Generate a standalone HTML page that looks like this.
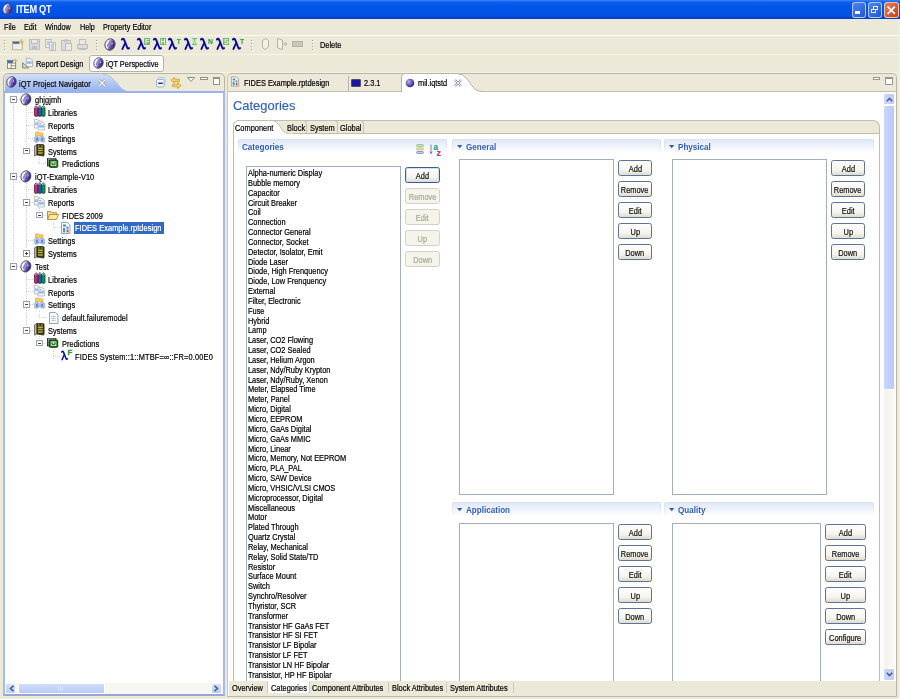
<!DOCTYPE html>
<html><head><meta charset="utf-8"><title>ITEM QT</title><style>
html,body{margin:0;padding:0;}
body{width:900px;height:699px;overflow:hidden;background:#ece9d8;position:relative;font-family:"Liberation Sans",sans-serif;font-size:8px;color:#1a1a1a;}
div{position:absolute;box-sizing:border-box;}
svg{position:absolute;overflow:visible;}
.t{white-space:nowrap;line-height:10px;height:10px;font-size:8.4px;transform:scaleX(0.885);transform-origin:0 50%;-webkit-text-stroke:0.2px currentColor;}
.b{white-space:nowrap;line-height:10px;height:10px;font-weight:bold;}
.btn{border:1px solid #5e7492;border-radius:2.5px;background:linear-gradient(#ffffff,#f5f4ee 65%,#dedbce);text-align:center;line-height:17px;font-size:8.4px;color:#111;-webkit-text-stroke:0.2px currentColor;}
.btn span{display:inline-block;transform:scaleX(0.885);}
.btn.dflt{border-color:#3f5c84;box-shadow:inset 0 0 0 1px #d2def2;}
.btn.dis{border-color:#d4d2c6;color:#aaa89a;background:#f5f4ea;}
.lb{border:1px solid #a2aec2;background:#fff;}
.sec{background:linear-gradient(#d6dff2,rgba(255,255,255,0)) left top/1px 100% no-repeat,linear-gradient(#d6dff2,rgba(255,255,255,0)) right top/1px 100% no-repeat,linear-gradient(#e0e8f8,#eef2fb 45%,#ffffff);border-top:1px solid #dbe3f3;border-radius:2px 2px 0 0;}
.sect{color:#335fb6;font-weight:bold;font-size:8.8px;white-space:nowrap;line-height:10px;transform:scaleX(0.92);transform-origin:0 50%;}
</style></head><body>
<div id="root" style="left:0;top:0;width:900px;height:699px;will-change:transform;">
<svg width="0" height="0" style="left:0;top:0"><defs><linearGradient id="gi" x1="0" y1="0" x2="1" y2="0"><stop offset="0" stop-color="#ffffff"/><stop offset="0.38" stop-color="#efecf9"/><stop offset="0.54" stop-color="#7262b6"/><stop offset="1" stop-color="#281a7c"/></linearGradient></defs></svg>
<div style="left:0px;top:0px;width:900px;height:19.4px;background:linear-gradient(#3f86f3 0%,#0d5eee 11%,#0055ea 35%,#0253e6 65%,#0650e2 82%,#023cc4 100%);"></div>
<svg style="left:1.6px;top:3.2px" width="11.040000000000001" height="11.96" viewBox="0 0 12 13"><g transform="rotate(20 6 6.5)"><ellipse cx="6" cy="6.5" rx="5" ry="5.8" fill="url(#gi)" stroke="#4a4062" stroke-width="0.9"/><path d="M4.2 2.6 L5.6 2 L5.2 10.6 L3.4 8.6 Z" fill="#6a5ab0" opacity="0.75"/><path d="M6.8 3.2 L8.6 5 L7.4 6.6 Z" fill="#d8d4f0" opacity="0.8"/></g></svg>
<div class="b" style="left:15.6px;top:4px;color:#fff;font-size:10.2px;font-weight:bold;letter-spacing:-0.3px;line-height:12px;height:12px;transform:scaleX(0.9);transform-origin:0 50%;">ITEM QT</div>
<div style="left:851.5px;top:1.5px;width:14.5px;height:16px;border:1px solid rgba(255,255,255,0.62);border-radius:3px;background:linear-gradient(135deg,#4f86f0,#1f55d6);"><div style="left:2.2px;top:8.8px;width:5px;height:2.3px;background:#fff"></div></div>
<div style="left:867.8px;top:1.5px;width:14.5px;height:16px;border:1px solid rgba(255,255,255,0.62);border-radius:3px;background:linear-gradient(135deg,#4f86f0,#1f55d6);"><div style="left:4.6px;top:3.2px;width:5px;height:4.4px;border:0.9px solid #e8eefc;border-top-width:1.4px"></div><div style="left:2.4px;top:6px;width:5px;height:4.4px;border:0.9px solid #e8eefc;border-top-width:1.4px;background:#3468de"></div></div>
<div style="left:884px;top:1.5px;width:14.5px;height:16px;border:1px solid rgba(255,255,255,0.62);border-radius:3px;background:linear-gradient(135deg,#e9805a,#c63c16);"><svg style="left:2.2px;top:3px" width="8.5" height="8.5" viewBox="0 0 8 8"><path d="M0.6 0.6 L7.4 7.4 M7.4 0.6 L0.6 7.4" stroke="#fff" stroke-width="1.7"/></svg></div>
<div class="t" style="left:4px;top:22px;color:#000;transform:scaleX(0.865);">File</div>
<div class="t" style="left:24px;top:22px;color:#000;transform:scaleX(0.865);">Edit</div>
<div class="t" style="left:45px;top:22px;color:#000;transform:scaleX(0.865);">Window</div>
<div class="t" style="left:80px;top:22px;color:#000;transform:scaleX(0.865);">Help</div>
<div class="t" style="left:103px;top:22px;color:#000;transform:scaleX(0.865);">Property Editor</div>
<div style="left:0px;top:34.5px;width:900px;height:1px;background:#fbfaf5;"></div>
<div style="left:0px;top:53.5px;width:900px;height:1px;background:#f5f3ea;"></div>
<div style="left:0px;top:72px;width:900px;height:1px;background:#f4f2e8;"></div>
<div style="left:4px;top:40px;width:1px;height:1px;background:#a9a698;"></div>
<div style="left:5px;top:41px;width:1px;height:1px;background:#fff;"></div>
<div style="left:4px;top:43px;width:1px;height:1px;background:#a9a698;"></div>
<div style="left:5px;top:44px;width:1px;height:1px;background:#fff;"></div>
<div style="left:4px;top:46px;width:1px;height:1px;background:#a9a698;"></div>
<div style="left:5px;top:47px;width:1px;height:1px;background:#fff;"></div>
<div style="left:4px;top:49px;width:1px;height:1px;background:#a9a698;"></div>
<div style="left:5px;top:50px;width:1px;height:1px;background:#fff;"></div>
<div style="left:96px;top:40px;width:1px;height:1px;background:#a9a698;"></div>
<div style="left:97px;top:41px;width:1px;height:1px;background:#fff;"></div>
<div style="left:96px;top:43px;width:1px;height:1px;background:#a9a698;"></div>
<div style="left:97px;top:44px;width:1px;height:1px;background:#fff;"></div>
<div style="left:96px;top:46px;width:1px;height:1px;background:#a9a698;"></div>
<div style="left:97px;top:47px;width:1px;height:1px;background:#fff;"></div>
<div style="left:96px;top:49px;width:1px;height:1px;background:#a9a698;"></div>
<div style="left:97px;top:50px;width:1px;height:1px;background:#fff;"></div>
<div style="left:251px;top:40px;width:1px;height:1px;background:#a9a698;"></div>
<div style="left:252px;top:41px;width:1px;height:1px;background:#fff;"></div>
<div style="left:251px;top:43px;width:1px;height:1px;background:#a9a698;"></div>
<div style="left:252px;top:44px;width:1px;height:1px;background:#fff;"></div>
<div style="left:251px;top:46px;width:1px;height:1px;background:#a9a698;"></div>
<div style="left:252px;top:47px;width:1px;height:1px;background:#fff;"></div>
<div style="left:251px;top:49px;width:1px;height:1px;background:#a9a698;"></div>
<div style="left:252px;top:50px;width:1px;height:1px;background:#fff;"></div>
<div style="left:312px;top:40px;width:1px;height:1px;background:#a9a698;"></div>
<div style="left:313px;top:41px;width:1px;height:1px;background:#fff;"></div>
<div style="left:312px;top:43px;width:1px;height:1px;background:#a9a698;"></div>
<div style="left:313px;top:44px;width:1px;height:1px;background:#fff;"></div>
<div style="left:312px;top:46px;width:1px;height:1px;background:#a9a698;"></div>
<div style="left:313px;top:47px;width:1px;height:1px;background:#fff;"></div>
<div style="left:312px;top:49px;width:1px;height:1px;background:#a9a698;"></div>
<div style="left:313px;top:50px;width:1px;height:1px;background:#fff;"></div>
<svg style="left:12px;top:39px" width="12" height="12" viewBox="0 0 12 12"><defs><linearGradient id="gn" x1="0" y1="0" x2="1" y2="0"><stop offset="0" stop-color="#dfeafc"/><stop offset="1" stop-color="#fbf4d4"/></linearGradient></defs><rect x="0.6" y="2.4" width="9.6" height="8.4" fill="url(#gn)" stroke="#a89a78" stroke-width="0.7"/><rect x="1" y="2.8" width="6.4" height="2" fill="#3e62ae"/><path d="M9.3 0 L10.1 1.9 L12 2.6 L10.1 3.4 L9.3 5.4 L8.5 3.4 L6.8 2.6 L8.5 1.9 Z" fill="#ecc440" stroke="#d0a020" stroke-width="0.3"/></svg>
<svg style="left:29px;top:39px" width="12" height="12" viewBox="0 0 12 12"><rect x="0.5" y="0.5" width="10" height="10" fill="#dadade" stroke="#bebec6"/><rect x="2.5" y="0.5" width="6" height="4" fill="#eceadf" stroke="#bebec6"/><rect x="3" y="7" width="5" height="3.5" fill="#bebec6"/></svg>
<svg style="left:45px;top:39px" width="12" height="12" viewBox="0 0 12 12"><rect x="0.5" y="0.5" width="6" height="8" fill="#e8e8ea" stroke="#bebec6"/><path d="M2 3h3M2 5h2" stroke="#9eb2d8"/><rect x="4.5" y="3.5" width="6" height="8" fill="#ecece8" stroke="#bebec6"/><path d="M6 6h3M6 8h3M6 10h3" stroke="#8ea6d4"/><path d="M8.5 3.5v2h2" fill="#e8dca0" stroke="#c8c0a0" stroke-width="0.5"/></svg>
<svg style="left:61px;top:39px" width="12" height="12" viewBox="0 0 12 12"><rect x="0.5" y="1.5" width="9" height="10" fill="#dadade" stroke="#bebec6"/><rect x="3" y="0.5" width="4" height="2" fill="#bebec6"/><rect x="4.5" y="4.5" width="6" height="7" fill="#eceadf" stroke="#bebec6"/></svg>
<svg style="left:77px;top:39px" width="12" height="12" viewBox="0 0 12 12"><rect x="2.5" y="0.5" width="6" height="5" fill="#eceadf" stroke="#bebec6"/><rect x="0.5" y="5.5" width="10" height="4" fill="#dadade" stroke="#bebec6"/><rect x="2" y="9" width="7" height="2" fill="#bebec6"/></svg>
<svg style="left:104px;top:38px" width="12.0" height="13.0" viewBox="0 0 12 13"><g transform="rotate(20 6 6.5)"><ellipse cx="6" cy="6.5" rx="5" ry="5.8" fill="url(#gi)" stroke="#4a4062" stroke-width="0.9"/><path d="M4.2 2.6 L5.6 2 L5.2 10.6 L3.4 8.6 Z" fill="#6a5ab0" opacity="0.75"/><path d="M6.8 3.2 L8.6 5 L7.4 6.6 Z" fill="#d8d4f0" opacity="0.8"/></g></svg>
<svg style="left:121.0px;top:37.3px" width="8.6" height="13.2" viewBox="0 0 10 14" preserveAspectRatio="none"><path d="M1 2.6 Q2.6 0.8 3.8 3.2 L7.4 11.6 Q8 12.8 9.4 11.8" stroke="#0c0c96" stroke-width="2.2" fill="none" stroke-linecap="round"/><path d="M4.9 6.2 L1.6 12.8" stroke="#0e0e9e" stroke-width="2.1" fill="none" stroke-linecap="round"/></svg>
<svg style="left:136.8px;top:37.3px" width="8.6" height="13.2" viewBox="0 0 10 14" preserveAspectRatio="none"><path d="M1 2.6 Q2.6 0.8 3.8 3.2 L7.4 11.6 Q8 12.8 9.4 11.8" stroke="#0c0c96" stroke-width="2.2" fill="none" stroke-linecap="round"/><path d="M4.9 6.2 L1.6 12.8" stroke="#0e0e9e" stroke-width="2.1" fill="none" stroke-linecap="round"/></svg>
<div style="left:144.4px;top:37.8px;width:5.6px;height:7.0px;background:rgba(84,172,84,0.78);color:#e2f6e0;font-weight:bold;font-size:6.8px;line-height:7.0px;text-align:center;">F</div>
<svg style="left:152.6px;top:37.3px" width="8.6" height="13.2" viewBox="0 0 10 14" preserveAspectRatio="none"><path d="M1 2.6 Q2.6 0.8 3.8 3.2 L7.4 11.6 Q8 12.8 9.4 11.8" stroke="#0c0c96" stroke-width="2.2" fill="none" stroke-linecap="round"/><path d="M4.9 6.2 L1.6 12.8" stroke="#0e0e9e" stroke-width="2.1" fill="none" stroke-linecap="round"/></svg>
<div style="left:160.2px;top:37.8px;width:5.6px;height:7.0px;background:rgba(84,172,84,0.78);color:#e2f6e0;font-weight:bold;font-size:6.8px;line-height:7.0px;text-align:center;">H</div>
<svg style="left:168.4px;top:37.3px" width="8.6" height="13.2" viewBox="0 0 10 14" preserveAspectRatio="none"><path d="M1 2.6 Q2.6 0.8 3.8 3.2 L7.4 11.6 Q8 12.8 9.4 11.8" stroke="#0c0c96" stroke-width="2.2" fill="none" stroke-linecap="round"/><path d="M4.9 6.2 L1.6 12.8" stroke="#0e0e9e" stroke-width="2.1" fill="none" stroke-linecap="round"/></svg>
<div style="left:176.0px;top:37.8px;width:5.6px;height:7.0px;background:transparent;color:#23943a;font-weight:bold;font-size:6.8px;line-height:7.0px;text-align:center;">T</div>
<svg style="left:184.2px;top:37.3px" width="8.6" height="13.2" viewBox="0 0 10 14" preserveAspectRatio="none"><path d="M1 2.6 Q2.6 0.8 3.8 3.2 L7.4 11.6 Q8 12.8 9.4 11.8" stroke="#0c0c96" stroke-width="2.2" fill="none" stroke-linecap="round"/><path d="M4.9 6.2 L1.6 12.8" stroke="#0e0e9e" stroke-width="2.1" fill="none" stroke-linecap="round"/></svg>
<div style="left:191.79999999999998px;top:37.8px;width:5.6px;height:7.0px;background:rgba(84,172,84,0.78);color:#e2f6e0;font-weight:bold;font-size:6.8px;line-height:7.0px;text-align:center;">M</div>
<svg style="left:200.0px;top:37.3px" width="8.6" height="13.2" viewBox="0 0 10 14" preserveAspectRatio="none"><path d="M1 2.6 Q2.6 0.8 3.8 3.2 L7.4 11.6 Q8 12.8 9.4 11.8" stroke="#0c0c96" stroke-width="2.2" fill="none" stroke-linecap="round"/><path d="M4.9 6.2 L1.6 12.8" stroke="#0e0e9e" stroke-width="2.1" fill="none" stroke-linecap="round"/></svg>
<div style="left:207.6px;top:37.8px;width:5.6px;height:7.0px;background:transparent;color:#23943a;font-weight:bold;font-size:6.8px;line-height:7.0px;text-align:center;">N</div>
<svg style="left:215.8px;top:37.3px" width="8.6" height="13.2" viewBox="0 0 10 14" preserveAspectRatio="none"><path d="M1 2.6 Q2.6 0.8 3.8 3.2 L7.4 11.6 Q8 12.8 9.4 11.8" stroke="#0c0c96" stroke-width="2.2" fill="none" stroke-linecap="round"/><path d="M4.9 6.2 L1.6 12.8" stroke="#0e0e9e" stroke-width="2.1" fill="none" stroke-linecap="round"/></svg>
<div style="left:223.4px;top:37.8px;width:5.6px;height:7.0px;background:rgba(84,172,84,0.78);color:#e2f6e0;font-weight:bold;font-size:6.8px;line-height:7.0px;text-align:center;">S</div>
<svg style="left:231.60000000000002px;top:37.3px" width="8.6" height="13.2" viewBox="0 0 10 14" preserveAspectRatio="none"><path d="M1 2.6 Q2.6 0.8 3.8 3.2 L7.4 11.6 Q8 12.8 9.4 11.8" stroke="#0c0c96" stroke-width="2.2" fill="none" stroke-linecap="round"/><path d="M4.9 6.2 L1.6 12.8" stroke="#0e0e9e" stroke-width="2.1" fill="none" stroke-linecap="round"/></svg>
<div style="left:239.20000000000002px;top:37.8px;width:5.6px;height:7.0px;background:transparent;color:#23943a;font-weight:bold;font-size:6.8px;line-height:7.0px;text-align:center;">T</div>
<svg style="left:260px;top:38px" width="10" height="12" viewBox="0 0 10 12"><path d="M2.5 2.5 L6 0.5 L8.5 2.5 L8.5 9 L5 11.5 L2.5 9.5 Z" fill="#f2f0e6" stroke="#b5b3a6"/></svg>
<svg style="left:276px;top:38px" width="12" height="12" viewBox="0 0 12 12"><path d="M1.5 0.5 L6.5 2 L6.5 11.5 L1.5 10 Z" fill="#f2f0e6" stroke="#b5b3a6"/><path d="M7 6h4M9 4l2 2l-2 2" stroke="#b5b3a6" fill="none"/></svg>
<div style="left:292px;top:41px;width:11px;height:6px;background:#c9c7bb;border:1px solid #b5b3a6;"></div>
<div class="t" style="left:320px;top:40px;color:#000;">Delete</div>
<svg style="left:6.8px;top:58px" width="11" height="11" viewBox="0 0 12 12"><rect x="0.5" y="2.5" width="9" height="9" fill="#fdfbf0" stroke="#6c6c50" stroke-width="0.8"/><rect x="0.9" y="2.9" width="5.6" height="2.4" fill="#3e62ae"/><path d="M0.5 5.5h9M4.5 5.5v6M4.5 8.5h5" stroke="#6c6c50" stroke-width="0.8"/><path d="M9.5 0 L10.2 1.8 L12 2.5 L10.2 3.2 L9.5 5 L8.8 3.2 L7 2.5 L8.8 1.8 Z" fill="#e8b830"/></svg>
<svg style="left:22px;top:58px" width="11" height="10.5" viewBox="0 0 11 10.5"><path d="M4.4 0.4h4.2l1.9 1.9v6.2h-6.1z" fill="#f4f6fa" stroke="#98a0ac" stroke-width="0.7"/><rect x="5" y="3.2" width="4.8" height="2.6" fill="#9cbcea"/><path d="M8.6 0.4v1.9h1.9z" fill="#e6d690"/><path d="M0.5 10 L0.5 4.6 L6.8 10 Z" fill="#c4c8b4" stroke="#7c8470" stroke-width="0.8"/><path d="M2 8.8 L2 7.2 L3.8 8.8Z" fill="#f0f0e8"/></svg>
<div class="t" style="left:36px;top:59.3px;color:#000;">Report Design</div>
<div style="left:89px;top:55px;width:75px;height:17px;background:#fff;border:1px solid #b5b2a2;border-radius:3px;"></div>
<svg style="left:93px;top:57px" width="11.040000000000001" height="11.96" viewBox="0 0 12 13"><g transform="rotate(20 6 6.5)"><ellipse cx="6" cy="6.5" rx="5" ry="5.8" fill="url(#gi)" stroke="#4a4062" stroke-width="0.9"/><path d="M4.2 2.6 L5.6 2 L5.2 10.6 L3.4 8.6 Z" fill="#6a5ab0" opacity="0.75"/><path d="M6.8 3.2 L8.6 5 L7.4 6.6 Z" fill="#d8d4f0" opacity="0.8"/></g></svg>
<div class="t" style="left:106px;top:59.3px;color:#000;">iQT Perspective</div>
<div style="left:3px;top:73px;width:222px;height:623px;border:1px solid #b9b5a2;border-radius:5px 5px 0 0;background:#ece9d8;"></div>
<svg style="left:4.5px;top:74px" width="130" height="18" viewBox="0 0 130 18"><defs><linearGradient id="g1" x1="0" y1="0" x2="0" y2="1"><stop offset="0" stop-color="#d3dff8"/><stop offset="1" stop-color="#93b1ec"/></linearGradient></defs><path d="M0 18 L0 3 Q0 0 3 0 L97 0 Q104 0 109.5 6.5 L116 14 Q119.5 18 128 18 Z" fill="url(#g1)"/><path d="M97 0 Q104 0 109.5 6.5 L116 14 Q119.5 18 128 18" fill="none" stroke="#a6b8dc" stroke-width="0.8"/></svg>
<svg style="left:6px;top:76px" width="11.040000000000001" height="11.96" viewBox="0 0 12 13"><g transform="rotate(20 6 6.5)"><ellipse cx="6" cy="6.5" rx="5" ry="5.8" fill="url(#gi)" stroke="#4a4062" stroke-width="0.9"/><path d="M4.2 2.6 L5.6 2 L5.2 10.6 L3.4 8.6 Z" fill="#6a5ab0" opacity="0.75"/><path d="M6.8 3.2 L8.6 5 L7.4 6.6 Z" fill="#d8d4f0" opacity="0.8"/></g></svg>
<div class="t" style="left:19px;top:78.7px;color:#000;letter-spacing:0.05px;">iQT Project Navigator</div>
<svg style="left:97.5px;top:78.5px" width="8" height="8" viewBox="0 0 8 8"><path d="M1 1 L7 7 M7 1 L1 7" stroke="#8a94ac" stroke-width="2.5"/><path d="M1 1 L7 7 M7 1 L1 7" stroke="#fff" stroke-width="1.2"/></svg>
<svg style="left:155.5px;top:77px" width="10" height="10.5" viewBox="0 0 10 10.5"><rect x="2" y="0.5" width="7" height="7" rx="1" fill="#e4ecf8" stroke="#b4c6e4"/><rect x="0.5" y="2.5" width="7.6" height="7.4" rx="1" fill="#f4f8fe" stroke="#9cb4dc"/><path d="M2.2 6.3h4.6" stroke="#2a3a6a" stroke-width="1.5"/></svg>
<svg style="left:170px;top:76.5px" width="12" height="12" viewBox="0 0 12 12"><path d="M9.5 2.2h-5v-1.9l-3.6 3l3.6 3v-1.9h5z" fill="#f6d468" stroke="#cc9c2c" stroke-width="0.8"/><path d="M2.5 7.4h5v-1.9l3.6 3l-3.6 3v-1.9h-5z" fill="#f6d468" stroke="#cc9c2c" stroke-width="0.8"/></svg>
<svg style="left:187px;top:77px" width="8" height="5" viewBox="0 0 8 5"><path d="M0.5 0.5h7l-3.5 4z" fill="#fff" stroke="#8a8878"/></svg>
<div style="left:200px;top:77px;width:8px;height:3px;background:#fff;border:1px solid #96947f;"></div>
<div style="left:212.8px;top:77px;width:7.4px;height:8px;background:#fff;border:1px solid #96947f;border-top-width:2px;"></div>
<div style="left:3px;top:91px;width:222px;height:605px;border:2px solid #a4bcec;border-top:2px solid #97b4ec;border-bottom:2px solid #93a8d4;background:#fff;"></div>
<div style="left:5px;top:682.8px;width:218px;height:10.8px;background:#f7f6f0;"></div>
<div style="left:5.4px;top:682.8px;width:11px;height:10.8px;background:linear-gradient(#d6e0fb,#bccdf5);border-radius:2px;border:1px solid #fff;"></div>
<div style="left:210.6px;top:682.8px;width:11px;height:10.8px;background:linear-gradient(#d6e0fb,#bccdf5);border-radius:2px;border:1px solid #fff;"></div>
<svg style="left:8.5px;top:684.5px" width="6" height="7" viewBox="0 0 6 7"><path d="M4.5 0.8 L1.5 3.5 L4.5 6.2" stroke="#4d6185" stroke-width="1.6" fill="none"/></svg>
<svg style="left:213px;top:684.5px" width="6" height="7" viewBox="0 0 6 7"><path d="M1.5 0.8 L4.5 3.5 L1.5 6.2" stroke="#4d6185" stroke-width="1.6" fill="none"/></svg>
<div style="left:17.5px;top:682.8px;width:87px;height:10.8px;background:linear-gradient(#d0dcfc,#b9cbf6);border-radius:2px;border:1px solid #fff;"></div>
<div style="left:57.5px;top:685.5px;width:1px;height:5px;background:#d8e2fc;"></div>
<div style="left:59.5px;top:685.5px;width:1px;height:5px;background:#d8e2fc;"></div>
<div style="left:61.5px;top:685.5px;width:1px;height:5px;background:#d8e2fc;"></div>
<div style="left:13px;top:104px;width:1px;height:158px;background:repeating-linear-gradient(180deg,#d2d2d2 0 1px,transparent 1px 2px);"></div>
<div style="left:13px;top:99px;width:7px;height:1px;background:repeating-linear-gradient(90deg,#d2d2d2 0 1px,transparent 1px 2px);"></div>
<div style="left:13px;top:176px;width:7px;height:1px;background:repeating-linear-gradient(90deg,#d2d2d2 0 1px,transparent 1px 2px);"></div>
<div style="left:13px;top:266px;width:7px;height:1px;background:repeating-linear-gradient(90deg,#d2d2d2 0 1px,transparent 1px 2px);"></div>
<div style="left:26px;top:106px;width:1px;height:45px;background:repeating-linear-gradient(180deg,#d2d2d2 0 1px,transparent 1px 2px);"></div>
<div style="left:26px;top:112px;width:8px;height:1px;background:repeating-linear-gradient(90deg,#d2d2d2 0 1px,transparent 1px 2px);"></div>
<div style="left:26px;top:125px;width:8px;height:1px;background:repeating-linear-gradient(90deg,#d2d2d2 0 1px,transparent 1px 2px);"></div>
<div style="left:26px;top:138px;width:8px;height:1px;background:repeating-linear-gradient(90deg,#d2d2d2 0 1px,transparent 1px 2px);"></div>
<div style="left:30px;top:150px;width:4px;height:1px;background:repeating-linear-gradient(90deg,#d2d2d2 0 1px,transparent 1px 2px);"></div>
<div style="left:39px;top:157px;width:1px;height:7px;background:repeating-linear-gradient(180deg,#d2d2d2 0 1px,transparent 1px 2px);"></div>
<div style="left:39px;top:163px;width:8px;height:1px;background:repeating-linear-gradient(90deg,#d2d2d2 0 1px,transparent 1px 2px);"></div>
<div style="left:26px;top:183px;width:1px;height:66px;background:repeating-linear-gradient(180deg,#d2d2d2 0 1px,transparent 1px 2px);"></div>
<div style="left:26px;top:189px;width:8px;height:1px;background:repeating-linear-gradient(90deg,#d2d2d2 0 1px,transparent 1px 2px);"></div>
<div style="left:30px;top:202px;width:4px;height:1px;background:repeating-linear-gradient(90deg,#d2d2d2 0 1px,transparent 1px 2px);"></div>
<div style="left:26px;top:240px;width:8px;height:1px;background:repeating-linear-gradient(90deg,#d2d2d2 0 1px,transparent 1px 2px);"></div>
<div style="left:30px;top:253px;width:4px;height:1px;background:repeating-linear-gradient(90deg,#d2d2d2 0 1px,transparent 1px 2px);"></div>
<div style="left:39px;top:208px;width:1px;height:3px;background:repeating-linear-gradient(180deg,#d2d2d2 0 1px,transparent 1px 2px);"></div>
<div style="left:43px;top:215px;width:4px;height:1px;background:repeating-linear-gradient(90deg,#d2d2d2 0 1px,transparent 1px 2px);"></div>
<div style="left:53px;top:221px;width:1px;height:7px;background:repeating-linear-gradient(180deg,#d2d2d2 0 1px,transparent 1px 2px);"></div>
<div style="left:53px;top:227px;width:8px;height:1px;background:repeating-linear-gradient(90deg,#d2d2d2 0 1px,transparent 1px 2px);"></div>
<div style="left:26px;top:272px;width:1px;height:54px;background:repeating-linear-gradient(180deg,#d2d2d2 0 1px,transparent 1px 2px);"></div>
<div style="left:26px;top:279px;width:8px;height:1px;background:repeating-linear-gradient(90deg,#d2d2d2 0 1px,transparent 1px 2px);"></div>
<div style="left:26px;top:291px;width:8px;height:1px;background:repeating-linear-gradient(90deg,#d2d2d2 0 1px,transparent 1px 2px);"></div>
<div style="left:30px;top:304px;width:4px;height:1px;background:repeating-linear-gradient(90deg,#d2d2d2 0 1px,transparent 1px 2px);"></div>
<div style="left:30px;top:330px;width:4px;height:1px;background:repeating-linear-gradient(90deg,#d2d2d2 0 1px,transparent 1px 2px);"></div>
<div style="left:39px;top:311px;width:1px;height:7px;background:repeating-linear-gradient(180deg,#d2d2d2 0 1px,transparent 1px 2px);"></div>
<div style="left:39px;top:317px;width:8px;height:1px;background:repeating-linear-gradient(90deg,#d2d2d2 0 1px,transparent 1px 2px);"></div>
<div style="left:39px;top:336px;width:1px;height:3px;background:repeating-linear-gradient(180deg,#d2d2d2 0 1px,transparent 1px 2px);"></div>
<div style="left:43px;top:343px;width:4px;height:1px;background:repeating-linear-gradient(90deg,#d2d2d2 0 1px,transparent 1px 2px);"></div>
<div style="left:53px;top:349px;width:1px;height:7px;background:repeating-linear-gradient(180deg,#d2d2d2 0 1px,transparent 1px 2px);"></div>
<div style="left:53px;top:356px;width:8px;height:1px;background:repeating-linear-gradient(90deg,#d2d2d2 0 1px,transparent 1px 2px);"></div>
<div style="left:10.3px;top:96.4px;width:6.6px;height:6.6px;border:1px solid #98a2b4;background:#fff;"><div style="left:0.8px;top:1.8px;width:3px;height:1px;background:#444"></div></div>
<div style="left:10.3px;top:173.29px;width:6.6px;height:6.6px;border:1px solid #98a2b4;background:#fff;"><div style="left:0.8px;top:1.8px;width:3px;height:1px;background:#444"></div></div>
<div style="left:10.3px;top:263.0px;width:6.6px;height:6.6px;border:1px solid #98a2b4;background:#fff;"><div style="left:0.8px;top:1.8px;width:3px;height:1px;background:#444"></div></div>
<div style="left:23.3px;top:147.66px;width:6.6px;height:6.6px;border:1px solid #98a2b4;background:#fff;"><div style="left:0.8px;top:1.8px;width:3px;height:1px;background:#444"></div></div>
<div style="left:23.3px;top:198.92px;width:6.6px;height:6.6px;border:1px solid #98a2b4;background:#fff;"><div style="left:0.8px;top:1.8px;width:3px;height:1px;background:#444"></div></div>
<div style="left:36.3px;top:211.73px;width:6.6px;height:6.6px;border:1px solid #98a2b4;background:#fff;"><div style="left:0.8px;top:1.8px;width:3px;height:1px;background:#444"></div></div>
<div style="left:23.3px;top:250.17999999999998px;width:6.6px;height:6.6px;border:1px solid #98a2b4;background:#fff;"><div style="left:0.8px;top:1.8px;width:3px;height:1px;background:#444"></div><div style="left:1.8px;top:0.8px;width:1px;height:3px;background:#444"></div></div>
<div style="left:23.3px;top:301.44px;width:6.6px;height:6.6px;border:1px solid #98a2b4;background:#fff;"><div style="left:0.8px;top:1.8px;width:3px;height:1px;background:#444"></div></div>
<div style="left:23.3px;top:327.07px;width:6.6px;height:6.6px;border:1px solid #98a2b4;background:#fff;"><div style="left:0.8px;top:1.8px;width:3px;height:1px;background:#444"></div></div>
<div style="left:36.3px;top:339.89px;width:6.6px;height:6.6px;border:1px solid #98a2b4;background:#fff;"><div style="left:0.8px;top:1.8px;width:3px;height:1px;background:#444"></div></div>
<div style="left:74px;top:221.7px;width:90px;height:12.5px;background:#316ac5;"></div>
<svg style="left:19.6px;top:93.4px" width="11.76" height="12.74" viewBox="0 0 12 13"><g transform="rotate(20 6 6.5)"><ellipse cx="6" cy="6.5" rx="5" ry="5.8" fill="url(#gi)" stroke="#4a4062" stroke-width="0.9"/><path d="M4.2 2.6 L5.6 2 L5.2 10.6 L3.4 8.6 Z" fill="#6a5ab0" opacity="0.75"/><path d="M6.8 3.2 L8.6 5 L7.4 6.6 Z" fill="#d8d4f0" opacity="0.8"/></g></svg>
<div class="t" style="left:35px;top:95.3px;color:#000;letter-spacing:0.06px;">ghjgjmh</div>
<svg style="left:33.8px;top:105.12px" width="11.6" height="12.4" viewBox="0 0 12 12.5"><path d="M0.5 2.8 L2.1 0.6 L4.1 2.3 L4.1 11 Q2.3 12.5 0.5 11 Z" fill="#cc2680" stroke="#5a1226" stroke-width="0.8"/><path d="M1 3 L2.2 1.4 L3.6 2.6" fill="none" stroke="#f2c4dc" stroke-width="0.8"/><path d="M4.3 2.6 L5.9 0.4 L7.8 2.1 L7.8 11 Q6 12.5 4.3 11 Z" fill="#2a5ca4" stroke="#10224c" stroke-width="0.8"/><path d="M4.8 2.8 L6 1.2 L7.3 2.4" fill="none" stroke="#c4d8f2" stroke-width="0.8"/><path d="M8 2.7 L9.6 0.6 L11.4 2.3 L11.4 11 Q9.7 12.4 8 11 Z" fill="#1c9258" stroke="#0a3a22" stroke-width="0.8"/><path d="M8.5 2.9 L9.7 1.4 L10.9 2.6" fill="none" stroke="#c4f0d8" stroke-width="0.8"/></svg>
<div class="t" style="left:48px;top:108.1px;color:#000;letter-spacing:0.06px;">Libraries</div>
<svg style="left:34.2px;top:118.73px" width="11" height="11.5" viewBox="0 0 11 11.5"><path d="M0.4 0.4h3.4l1.4 1.4v7.2h-4.8z" fill="#f2f5fa" stroke="#a2aab8" stroke-width="0.7"/><rect x="0.8" y="3.4" width="4" height="2.6" fill="#a6c2ec"/><path d="M3.8 0.4v1.4h1.4z" fill="#ead68c"/><path d="M4 2.2h4.2l2.2 2.2v6.6h-6.4z" fill="#f6f8fc" stroke="#a2aab8" stroke-width="0.7"/><rect x="4.5" y="5.8" width="5.4" height="2.8" fill="#9abaec"/><path d="M8.2 2.2v2.2h2.2z" fill="#ead68c"/><path d="M5.2 4.4h2" stroke="#56627a" stroke-width="0.6"/></svg>
<div class="t" style="left:48px;top:120.9px;color:#000;letter-spacing:0.06px;">Reports</div>
<svg style="left:34.3px;top:130.55px" width="11" height="12" viewBox="0 0 11 12"><path d="M1.4 2.2 Q1.4 0.6 3 0.8 L4.6 1 L5.4 1.8 L8.2 1.8 Q9.2 2 9 3.4 L9 5 L1.4 5 Z" fill="#f2cc68" stroke="#d0a040" stroke-width="0.6"/><path d="M0.4 6.4 Q2 4.6 4 5.8 L5.4 6.8 L7 5.6 Q9.4 4.8 10.6 6.6 L10.6 10.8 Q8.6 12 7 10.6 L5.4 9.6 L4 10.8 Q2 12 0.4 10.6 Z" fill="#b4c6ee" stroke="#8aa2da" stroke-width="0.6"/><path d="M2 7 L4.6 10 M3.6 6.6 L2.4 10.2 M7 7.2 L9.4 9.8 M9 6.8 L7.4 10" stroke="#5672bc" stroke-width="0.9" fill="none"/></svg>
<div class="t" style="left:48px;top:133.8px;color:#000;letter-spacing:0.06px;">Settings</div>
<svg style="left:34.3px;top:143.76px" width="10.6" height="12.6" viewBox="0 0 10.6 12.6"><path d="M0.5 1.8 L3 0.5 L3 11 L0.5 12.1 Z" fill="#b8b8ae" stroke="#4a4a40" stroke-width="0.7"/><path d="M3 0.5 L9.4 0.5 L10.1 1.6 L10.1 11.4 L9.4 12.1 L3 11 Z" fill="#34340f" stroke="#2a2a0c" stroke-width="0.7"/><path d="M4 2h1.4M7.2 2h1.4" stroke="#e0d860" stroke-width="1.1"/><path d="M4 4.2h4.8M4 6.6h4.8M4 9h4.8" stroke="#b8b040" stroke-width="1.5"/></svg>
<div class="t" style="left:48px;top:146.6px;color:#000;letter-spacing:0.06px;">Systems</div>
<svg style="left:47.2px;top:158.38px" width="11.2" height="9.8" viewBox="0 0 11.2 9.8"><rect x="0.5" y="0.5" width="8.4" height="7.4" fill="#7c8c84" stroke="#2c3a30" stroke-width="1"/><path d="M1 1h7.4" stroke="#a8b4c4" stroke-width="0.8"/><rect x="2.4" y="2" width="8.3" height="7.3" rx="0.8" fill="#2a6a2a" stroke="#143414" stroke-width="1"/><rect x="3.7" y="3.3" width="5.7" height="4.7" fill="#b6e69c"/><path d="M5 4.4 L5 6.2 Q6.5 7.2 8 6.2 L8 4.4" fill="none" stroke="#1e4e1e" stroke-width="1"/></svg>
<div class="t" style="left:62px;top:159.4px;color:#000;letter-spacing:0.06px;">Predictions</div>
<svg style="left:19.6px;top:170.29px" width="11.76" height="12.74" viewBox="0 0 12 13"><g transform="rotate(20 6 6.5)"><ellipse cx="6" cy="6.5" rx="5" ry="5.8" fill="url(#gi)" stroke="#4a4062" stroke-width="0.9"/><path d="M4.2 2.6 L5.6 2 L5.2 10.6 L3.4 8.6 Z" fill="#6a5ab0" opacity="0.75"/><path d="M6.8 3.2 L8.6 5 L7.4 6.6 Z" fill="#d8d4f0" opacity="0.8"/></g></svg>
<div class="t" style="left:35px;top:172.2px;color:#000;letter-spacing:0.06px;">iQT-Example-V10</div>
<svg style="left:33.8px;top:182.01px" width="11.6" height="12.4" viewBox="0 0 12 12.5"><path d="M0.5 2.8 L2.1 0.6 L4.1 2.3 L4.1 11 Q2.3 12.5 0.5 11 Z" fill="#cc2680" stroke="#5a1226" stroke-width="0.8"/><path d="M1 3 L2.2 1.4 L3.6 2.6" fill="none" stroke="#f2c4dc" stroke-width="0.8"/><path d="M4.3 2.6 L5.9 0.4 L7.8 2.1 L7.8 11 Q6 12.5 4.3 11 Z" fill="#2a5ca4" stroke="#10224c" stroke-width="0.8"/><path d="M4.8 2.8 L6 1.2 L7.3 2.4" fill="none" stroke="#c4d8f2" stroke-width="0.8"/><path d="M8 2.7 L9.6 0.6 L11.4 2.3 L11.4 11 Q9.7 12.4 8 11 Z" fill="#1c9258" stroke="#0a3a22" stroke-width="0.8"/><path d="M8.5 2.9 L9.7 1.4 L10.9 2.6" fill="none" stroke="#c4f0d8" stroke-width="0.8"/></svg>
<div class="t" style="left:48px;top:185.0px;color:#000;letter-spacing:0.06px;">Libraries</div>
<svg style="left:34.2px;top:195.62px" width="11" height="11.5" viewBox="0 0 11 11.5"><path d="M0.4 0.4h3.4l1.4 1.4v7.2h-4.8z" fill="#f2f5fa" stroke="#a2aab8" stroke-width="0.7"/><rect x="0.8" y="3.4" width="4" height="2.6" fill="#a6c2ec"/><path d="M3.8 0.4v1.4h1.4z" fill="#ead68c"/><path d="M4 2.2h4.2l2.2 2.2v6.6h-6.4z" fill="#f6f8fc" stroke="#a2aab8" stroke-width="0.7"/><rect x="4.5" y="5.8" width="5.4" height="2.8" fill="#9abaec"/><path d="M8.2 2.2v2.2h2.2z" fill="#ead68c"/><path d="M5.2 4.4h2" stroke="#56627a" stroke-width="0.6"/></svg>
<div class="t" style="left:48px;top:197.8px;color:#000;letter-spacing:0.06px;">Reports</div>
<svg style="left:47px;top:210.03px" width="12" height="10" viewBox="0 0 12 10"><path d="M0.5 9.5v-8h3.5l1 1.2h4.5v2" fill="#f6d88a" stroke="#b88a28" stroke-width="0.9"/><path d="M0.5 9.5l2-5h9l-2 5z" fill="#fbe8a8" stroke="#b88a28" stroke-width="0.9"/></svg>
<div class="t" style="left:62px;top:210.6px;color:#000;letter-spacing:0.06px;">FIDES 2009</div>
<svg style="left:61px;top:221.85px" width="10" height="12" viewBox="0 0 10 12"><path d="M0.5 0.5h6l2.5 2.5v8.5h-8.5z" fill="#f6f8fc" stroke="#8a9ab8" stroke-width="0.9"/><rect x="2" y="2.6" width="3" height="2" fill="#3a88d8"/><rect x="5.4" y="4.6" width="2.2" height="2.2" fill="#4a9ad0"/><rect x="2" y="6" width="2.2" height="4.4" fill="#38a0b0"/><rect x="5.6" y="7.6" width="2" height="2.8" fill="#d04848"/></svg>
<div class="t" style="left:75px;top:223.4px;color:#000;letter-spacing:0.06px;color:#fff;">FIDES Example.rptdesign</div>
<svg style="left:34.3px;top:233.07px" width="11" height="12" viewBox="0 0 11 12"><path d="M1.4 2.2 Q1.4 0.6 3 0.8 L4.6 1 L5.4 1.8 L8.2 1.8 Q9.2 2 9 3.4 L9 5 L1.4 5 Z" fill="#f2cc68" stroke="#d0a040" stroke-width="0.6"/><path d="M0.4 6.4 Q2 4.6 4 5.8 L5.4 6.8 L7 5.6 Q9.4 4.8 10.6 6.6 L10.6 10.8 Q8.6 12 7 10.6 L5.4 9.6 L4 10.8 Q2 12 0.4 10.6 Z" fill="#b4c6ee" stroke="#8aa2da" stroke-width="0.6"/><path d="M2 7 L4.6 10 M3.6 6.6 L2.4 10.2 M7 7.2 L9.4 9.8 M9 6.8 L7.4 10" stroke="#5672bc" stroke-width="0.9" fill="none"/></svg>
<div class="t" style="left:48px;top:236.3px;color:#000;letter-spacing:0.06px;">Settings</div>
<svg style="left:34.3px;top:246.28px" width="10.6" height="12.6" viewBox="0 0 10.6 12.6"><path d="M0.5 1.8 L3 0.5 L3 11 L0.5 12.1 Z" fill="#b8b8ae" stroke="#4a4a40" stroke-width="0.7"/><path d="M3 0.5 L9.4 0.5 L10.1 1.6 L10.1 11.4 L9.4 12.1 L3 11 Z" fill="#34340f" stroke="#2a2a0c" stroke-width="0.7"/><path d="M4 2h1.4M7.2 2h1.4" stroke="#e0d860" stroke-width="1.1"/><path d="M4 4.2h4.8M4 6.6h4.8M4 9h4.8" stroke="#b8b040" stroke-width="1.5"/></svg>
<div class="t" style="left:48px;top:249.1px;color:#000;letter-spacing:0.06px;">Systems</div>
<svg style="left:19.6px;top:260.0px" width="11.76" height="12.74" viewBox="0 0 12 13"><g transform="rotate(20 6 6.5)"><ellipse cx="6" cy="6.5" rx="5" ry="5.8" fill="url(#gi)" stroke="#4a4062" stroke-width="0.9"/><path d="M4.2 2.6 L5.6 2 L5.2 10.6 L3.4 8.6 Z" fill="#6a5ab0" opacity="0.75"/><path d="M6.8 3.2 L8.6 5 L7.4 6.6 Z" fill="#d8d4f0" opacity="0.8"/></g></svg>
<div class="t" style="left:35px;top:261.9px;color:#000;letter-spacing:0.06px;">Test</div>
<svg style="left:33.8px;top:271.71px" width="11.6" height="12.4" viewBox="0 0 12 12.5"><path d="M0.5 2.8 L2.1 0.6 L4.1 2.3 L4.1 11 Q2.3 12.5 0.5 11 Z" fill="#cc2680" stroke="#5a1226" stroke-width="0.8"/><path d="M1 3 L2.2 1.4 L3.6 2.6" fill="none" stroke="#f2c4dc" stroke-width="0.8"/><path d="M4.3 2.6 L5.9 0.4 L7.8 2.1 L7.8 11 Q6 12.5 4.3 11 Z" fill="#2a5ca4" stroke="#10224c" stroke-width="0.8"/><path d="M4.8 2.8 L6 1.2 L7.3 2.4" fill="none" stroke="#c4d8f2" stroke-width="0.8"/><path d="M8 2.7 L9.6 0.6 L11.4 2.3 L11.4 11 Q9.7 12.4 8 11 Z" fill="#1c9258" stroke="#0a3a22" stroke-width="0.8"/><path d="M8.5 2.9 L9.7 1.4 L10.9 2.6" fill="none" stroke="#c4f0d8" stroke-width="0.8"/></svg>
<div class="t" style="left:48px;top:274.7px;color:#000;letter-spacing:0.06px;">Libraries</div>
<svg style="left:34.2px;top:285.33px" width="11" height="11.5" viewBox="0 0 11 11.5"><path d="M0.4 0.4h3.4l1.4 1.4v7.2h-4.8z" fill="#f2f5fa" stroke="#a2aab8" stroke-width="0.7"/><rect x="0.8" y="3.4" width="4" height="2.6" fill="#a6c2ec"/><path d="M3.8 0.4v1.4h1.4z" fill="#ead68c"/><path d="M4 2.2h4.2l2.2 2.2v6.6h-6.4z" fill="#f6f8fc" stroke="#a2aab8" stroke-width="0.7"/><rect x="4.5" y="5.8" width="5.4" height="2.8" fill="#9abaec"/><path d="M8.2 2.2v2.2h2.2z" fill="#ead68c"/><path d="M5.2 4.4h2" stroke="#56627a" stroke-width="0.6"/></svg>
<div class="t" style="left:48px;top:287.5px;color:#000;letter-spacing:0.06px;">Reports</div>
<svg style="left:34.3px;top:297.14px" width="11" height="12" viewBox="0 0 11 12"><path d="M1.4 2.2 Q1.4 0.6 3 0.8 L4.6 1 L5.4 1.8 L8.2 1.8 Q9.2 2 9 3.4 L9 5 L1.4 5 Z" fill="#f2cc68" stroke="#d0a040" stroke-width="0.6"/><path d="M0.4 6.4 Q2 4.6 4 5.8 L5.4 6.8 L7 5.6 Q9.4 4.8 10.6 6.6 L10.6 10.8 Q8.6 12 7 10.6 L5.4 9.6 L4 10.8 Q2 12 0.4 10.6 Z" fill="#b4c6ee" stroke="#8aa2da" stroke-width="0.6"/><path d="M2 7 L4.6 10 M3.6 6.6 L2.4 10.2 M7 7.2 L9.4 9.8 M9 6.8 L7.4 10" stroke="#5672bc" stroke-width="0.9" fill="none"/></svg>
<div class="t" style="left:48px;top:300.3px;color:#000;letter-spacing:0.06px;">Settings</div>
<svg style="left:48.6px;top:311.56px" width="10" height="12" viewBox="0 0 10 12"><path d="M0.5 0.5h6l2.5 2.5v8.5h-8.5z" fill="#f6f8fc" stroke="#8a9ab8" stroke-width="0.9"/><path d="M2.5 4.5h4M2.5 6.5h4M2.5 8.5h4" stroke="#a8b8d0" stroke-width="0.8"/></svg>
<div class="t" style="left:62px;top:313.2px;color:#000;letter-spacing:0.06px;">default.failuremodel</div>
<svg style="left:34.3px;top:323.17px" width="10.6" height="12.6" viewBox="0 0 10.6 12.6"><path d="M0.5 1.8 L3 0.5 L3 11 L0.5 12.1 Z" fill="#b8b8ae" stroke="#4a4a40" stroke-width="0.7"/><path d="M3 0.5 L9.4 0.5 L10.1 1.6 L10.1 11.4 L9.4 12.1 L3 11 Z" fill="#34340f" stroke="#2a2a0c" stroke-width="0.7"/><path d="M4 2h1.4M7.2 2h1.4" stroke="#e0d860" stroke-width="1.1"/><path d="M4 4.2h4.8M4 6.6h4.8M4 9h4.8" stroke="#b8b040" stroke-width="1.5"/></svg>
<div class="t" style="left:48px;top:326.0px;color:#000;letter-spacing:0.06px;">Systems</div>
<svg style="left:47.2px;top:337.79px" width="11.2" height="9.8" viewBox="0 0 11.2 9.8"><rect x="0.5" y="0.5" width="8.4" height="7.4" fill="#7c8c84" stroke="#2c3a30" stroke-width="1"/><path d="M1 1h7.4" stroke="#a8b4c4" stroke-width="0.8"/><rect x="2.4" y="2" width="8.3" height="7.3" rx="0.8" fill="#2a6a2a" stroke="#143414" stroke-width="1"/><rect x="3.7" y="3.3" width="5.7" height="4.7" fill="#b6e69c"/><path d="M5 4.4 L5 6.2 Q6.5 7.2 8 6.2 L8 4.4" fill="none" stroke="#1e4e1e" stroke-width="1"/></svg>
<div class="t" style="left:62px;top:338.8px;color:#000;letter-spacing:0.06px;">Predictions</div>
<svg style="left:61px;top:349.5px" width="6.88" height="10.56" viewBox="0 0 10 14" preserveAspectRatio="none"><path d="M1 2.6 Q2.6 0.8 3.8 3.2 L7.4 11.6 Q8 12.8 9.4 11.8" stroke="#0c0c96" stroke-width="2.2" fill="none" stroke-linecap="round"/><path d="M4.9 6.2 L1.6 12.8" stroke="#0e0e9e" stroke-width="2.1" fill="none" stroke-linecap="round"/></svg>
<div style="left:67.6px;top:348.9px;width:5px;height:7px;color:#2e9e3c;font-weight:bold;font-size:8px;line-height:7px;-webkit-text-stroke:0.3px #2e9e3c;">F</div>
<div class="t" style="left:75px;top:351.6px;color:#000;letter-spacing:0.06px;letter-spacing:0.18px;">FIDES System::1::MTBF=∞::FR=0.00E0</div>
<div style="left:226.9px;top:73px;width:670.1px;height:624px;border:1px solid #bbb7a4;border-left-color:#cdc9b7;border-radius:5px 5px 0 0;background:#ece9d8;"></div>
<div style="left:228px;top:74px;width:668px;height:18px;background:#ede9da;border-radius:5px 5px 0 0;"></div>
<div style="left:227.9px;top:90.6px;width:668.1px;height:605.4px;background:#fff;border-top:1px solid #c6c2b0;"></div>
<svg style="left:401px;top:73px" width="90" height="19" viewBox="0 0 90 19"><path d="M0.5 19 L0.5 4 Q0.5 0.5 4 0.5 L56 0.5 Q62 0.5 66 6 L72 14 Q75 18.5 82 18.5 L82 19 Z" fill="#fff"/><path d="M0.5 19 L0.5 4 Q0.5 0.5 4 0.5 L56 0.5 Q62 0.5 66 6 L72 14 Q75 18.5 82 18.5" fill="none" stroke="#b8b4a1" stroke-width="1"/></svg>
<div style="left:347.5px;top:74px;width:8px;height:17px;border-left:1px solid #b8b4a1;border-top:1px solid #b8b4a1;border-radius:4px 0 0 0;"></div>
<div style="left:349px;top:74px;width:8px;height:2px;background:#ece9d8;"></div>
<svg style="left:231.3px;top:76.3px" width="8.5" height="11.2" viewBox="0 0 10 12"><path d="M0.5 0.5h6l2.5 2.5v8.5h-8.5z" fill="#f4f4ec" stroke="#9a9a88" stroke-width="0.9"/><rect x="2" y="2.6" width="3" height="2" fill="#3a88d8"/><rect x="5.4" y="4.6" width="2.2" height="2.2" fill="#4a9ad0"/><rect x="2" y="6" width="2.2" height="4.4" fill="#38a0b0"/><rect x="5.6" y="7.6" width="2" height="2.8" fill="#d04848"/></svg>
<div class="t" style="left:243.8px;top:78.4px;color:#000;">FIDES Example.rptdesign</div>
<div style="left:351px;top:79px;width:10px;height:8px;background:#1818a0;border:1px solid #50506a;border-radius:1px;"></div>
<div class="t" style="left:364px;top:78.4px;color:#000;">2.3.1</div>
<svg style="left:405px;top:78px" width="10" height="10" viewBox="0 0 10 10"><defs><radialGradient id="rg" cx="0.35" cy="0.35" r="0.7"><stop offset="0" stop-color="#b8b0e8"/><stop offset="1" stop-color="#2a1a88"/></radialGradient></defs><circle cx="5" cy="5" r="4.3" fill="url(#rg)"/></svg>
<div class="t" style="left:418px;top:78.4px;color:#000;">mil.iqtstd</div>
<svg style="left:453.5px;top:78.5px" width="8" height="8" viewBox="0 0 8 8"><path d="M1 1 L7 7 M7 1 L1 7" stroke="#8a93a8" stroke-width="2.2"/><path d="M1 1 L7 7 M7 1 L1 7" stroke="#fff" stroke-width="0.8"/></svg>
<div style="left:872.5px;top:77px;width:7.5px;height:3px;background:#fff;border:1px solid #9a9888;"></div>
<div style="left:885px;top:76.7px;width:7.7px;height:8px;background:#fff;border:1px solid #9a9888;border-top-width:2px;"></div>
<div class="t" style="left:233px;top:97.5px;color:#2e5fb8;font-size:13.6px;line-height:16px;height:16px;transform:scaleX(0.95);-webkit-text-stroke:0.15px #2e5fb8;">Categories</div>
<div style="left:883.5px;top:92px;width:11.2px;height:589px;background:linear-gradient(90deg,#f3f2ec,#fbfbf8);"></div>
<div style="left:883.3px;top:93px;width:11.4px;height:12.4px;background:linear-gradient(90deg,#cbd7fb,#bccbf7);border:1px solid #fff;border-radius:2px;"></div>
<svg style="left:885.6px;top:96.6px" width="7" height="5" viewBox="0 0 7 5"><path d="M0.8 4.2 L3.5 1.4 L6.2 4.2" stroke="#4d6185" stroke-width="1.6" fill="none"/></svg>
<div style="left:883.3px;top:105.4px;width:11.4px;height:284.6px;background:linear-gradient(90deg,#cbd7fb,#b9c9f7);border:1px solid #fff;border-radius:2px;"></div>
<div style="left:883.3px;top:668px;width:11.4px;height:12.6px;background:linear-gradient(90deg,#cbd7fb,#bccbf7);border:1px solid #fff;border-radius:2px;"></div>
<svg style="left:885.6px;top:672px" width="7" height="5" viewBox="0 0 7 5"><path d="M0.8 0.8 L3.5 3.6 L6.2 0.8" stroke="#4d6185" stroke-width="1.6" fill="none"/></svg>
<div style="left:233px;top:120px;width:647px;height:562px;border:1px solid #c2beac;border-bottom:none;border-radius:7px 7px 0 0;background:#ece9d8;"></div>
<div style="left:234px;top:133px;width:645px;height:548px;background:#fff;border-top:1px solid #c2beac;"></div>
<svg style="left:233px;top:120px" width="60" height="14" viewBox="0 0 60 14"><path d="M0.5 14 L0.5 6 Q0.5 0.5 6 0.5 L39 0.5 Q43 0.5 46 5 L50 11 Q52 13.5 56 13.5 L60 13.5 L60 14 Z" fill="#fff"/><path d="M0.5 14 L0.5 6 Q0.5 0.5 6 0.5 L39 0.5 Q43 0.5 46 5 L50 11 Q52 13.5 56 13.5" fill="none" stroke="#c2beac"/></svg>
<div class="t" style="left:235px;top:123px;color:#000;">Component</div>
<div class="t" style="left:287px;top:123px;color:#000;">Block</div>
<div style="left:300.5px;top:120px;width:6px;height:13.4px;border-right:1px solid #c6c2b0;border-top:1px solid #c6c2b0;border-radius:0 4px 0 0;"></div>
<div class="t" style="left:310px;top:123px;color:#000;">System</div>
<div style="left:331.6px;top:120px;width:6px;height:13.4px;border-right:1px solid #c6c2b0;border-top:1px solid #c6c2b0;border-radius:0 4px 0 0;"></div>
<div class="t" style="left:340px;top:123px;color:#000;">Global</div>
<div style="left:357.7px;top:120px;width:6px;height:13.4px;border-right:1px solid #c6c2b0;border-top:1px solid #c6c2b0;border-radius:0 4px 0 0;"></div>
<div class="sec" style="left:238px;top:139px;width:209px;height:14px;"></div>
<div class="sect" style="left:242px;top:141.8px;">Categories</div>
<div class="sec" style="left:452px;top:139px;width:209px;height:14px;"></div>
<svg style="left:457px;top:144.5px" width="5.4" height="3.2" viewBox="0 0 7 4"><path d="M0 0h7l-3.5 4z" fill="#335fb6"/></svg>
<div class="sect" style="left:466.3px;top:141.8px;">General</div>
<div class="sec" style="left:664px;top:139px;width:210px;height:14px;"></div>
<svg style="left:669px;top:144.5px" width="5.4" height="3.2" viewBox="0 0 7 4"><path d="M0 0h7l-3.5 4z" fill="#335fb6"/></svg>
<div class="sect" style="left:678.3px;top:141.8px;">Physical</div>
<div class="sec" style="left:452px;top:502.4px;width:209px;height:14px;"></div>
<svg style="left:457px;top:507.9px" width="5.4" height="3.2" viewBox="0 0 7 4"><path d="M0 0h7l-3.5 4z" fill="#335fb6"/></svg>
<div class="sect" style="left:466.3px;top:505.2px;">Application</div>
<div class="sec" style="left:664px;top:502.4px;width:210px;height:14px;"></div>
<svg style="left:669px;top:507.9px" width="5.4" height="3.2" viewBox="0 0 7 4"><path d="M0 0h7l-3.5 4z" fill="#335fb6"/></svg>
<div class="sect" style="left:678.3px;top:505.2px;">Quality</div>
<svg style="left:416px;top:144px" width="8" height="11" viewBox="0 0 8 11"><rect x="0.5" y="0.5" width="7" height="2" rx="1" fill="#c8e8c0" stroke="#78b878" stroke-width="0.7"/><rect x="0.5" y="4" width="7" height="2" rx="1" fill="#f6e8a0" stroke="#c8b048" stroke-width="0.7"/><rect x="0.5" y="7.5" width="7" height="2" rx="1" fill="#c0d0f0" stroke="#6080c0" stroke-width="0.7"/></svg>
<svg style="left:429px;top:143px" width="13" height="13" viewBox="0 0 13 13"><path d="M2 1.5v9M0.8 8.6L2 10.6L3.2 8.6" stroke="#556" fill="none" stroke-width="0.7"/></svg>
<div class="t" style="left:433.5px;top:141.5px;color:#2a9a80;font-weight:bold;font-size:8.5px;transform:none;">a</div>
<div class="t" style="left:436.5px;top:148px;color:#b83a9a;font-weight:bold;font-size:9px;transform:none;">z</div>
<div class="lb" style="left:246px;top:166px;width:155px;height:518px;border-bottom:none;"></div>
<div class="t" style="left:248px;top:168px;color:#000;">Alpha-numeric Display</div>
<div class="t" style="left:248px;top:178px;color:#000;">Bubble memory</div>
<div class="t" style="left:248px;top:188px;color:#000;">Capacitor</div>
<div class="t" style="left:248px;top:198px;color:#000;">Circuit Breaker</div>
<div class="t" style="left:248px;top:207px;color:#000;">Coil</div>
<div class="t" style="left:248px;top:217px;color:#000;">Connection</div>
<div class="t" style="left:248px;top:227px;color:#000;">Connector General</div>
<div class="t" style="left:248px;top:237px;color:#000;">Connector, Socket</div>
<div class="t" style="left:248px;top:247px;color:#000;">Detector, Isolator, Emit</div>
<div class="t" style="left:248px;top:257px;color:#000;">Diode Laser</div>
<div class="t" style="left:248px;top:266px;color:#000;">Diode, High Frenquency</div>
<div class="t" style="left:248px;top:276px;color:#000;">Diode, Low Frenquency</div>
<div class="t" style="left:248px;top:286px;color:#000;">External</div>
<div class="t" style="left:248px;top:296px;color:#000;">Filter, Electronic</div>
<div class="t" style="left:248px;top:306px;color:#000;">Fuse</div>
<div class="t" style="left:248px;top:316px;color:#000;">Hybrid</div>
<div class="t" style="left:248px;top:325px;color:#000;">Lamp</div>
<div class="t" style="left:248px;top:335px;color:#000;">Laser, CO2 Flowing</div>
<div class="t" style="left:248px;top:345px;color:#000;">Laser, CO2 Sealed</div>
<div class="t" style="left:248px;top:355px;color:#000;">Laser, Helium Argon</div>
<div class="t" style="left:248px;top:365px;color:#000;">Laser, Ndy/Ruby Krypton</div>
<div class="t" style="left:248px;top:375px;color:#000;">Laser, Ndy/Ruby, Xenon</div>
<div class="t" style="left:248px;top:384px;color:#000;">Meter, Elapsed Time</div>
<div class="t" style="left:248px;top:394px;color:#000;">Meter, Panel</div>
<div class="t" style="left:248px;top:404px;color:#000;">Micro, Digital</div>
<div class="t" style="left:248px;top:414px;color:#000;">Micro, EEPROM</div>
<div class="t" style="left:248px;top:424px;color:#000;">Micro, GaAs Digital</div>
<div class="t" style="left:248px;top:434px;color:#000;">Micro, GaAs MMIC</div>
<div class="t" style="left:248px;top:444px;color:#000;">Micro, Linear</div>
<div class="t" style="left:248px;top:453px;color:#000;">Micro, Memory, Not EEPROM</div>
<div class="t" style="left:248px;top:463px;color:#000;">Micro, PLA_PAL</div>
<div class="t" style="left:248px;top:473px;color:#000;">Micro, SAW Device</div>
<div class="t" style="left:248px;top:483px;color:#000;">Micro, VHSIC/VLSI CMOS</div>
<div class="t" style="left:248px;top:493px;color:#000;">Microprocessor, Digital</div>
<div class="t" style="left:248px;top:503px;color:#000;">Miscellaneous</div>
<div class="t" style="left:248px;top:512px;color:#000;">Motor</div>
<div class="t" style="left:248px;top:522px;color:#000;">Plated Through</div>
<div class="t" style="left:248px;top:532px;color:#000;">Quartz Crystal</div>
<div class="t" style="left:248px;top:542px;color:#000;">Relay, Mechanical</div>
<div class="t" style="left:248px;top:552px;color:#000;">Relay, Solid State/TD</div>
<div class="t" style="left:248px;top:562px;color:#000;">Resistor</div>
<div class="t" style="left:248px;top:571px;color:#000;">Surface Mount</div>
<div class="t" style="left:248px;top:581px;color:#000;">Switch</div>
<div class="t" style="left:248px;top:591px;color:#000;">Synchro/Resolver</div>
<div class="t" style="left:248px;top:601px;color:#000;">Thyristor, SCR</div>
<div class="t" style="left:248px;top:611px;color:#000;">Transformer</div>
<div class="t" style="left:248px;top:621px;color:#000;">Transistor HF GaAs FET</div>
<div class="t" style="left:248px;top:630px;color:#000;">Transistor HF SI FET</div>
<div class="t" style="left:248px;top:640px;color:#000;">Transistor LF Bipolar</div>
<div class="t" style="left:248px;top:650px;color:#000;">Transistor LF FET</div>
<div class="t" style="left:248px;top:660px;color:#000;">Transistor LN HF Bipolar</div>
<div class="t" style="left:248px;top:670px;color:#000;">Transistor, HP HF Bipolar</div>
<div class="btn dflt" style="left:405px;top:167px;width:35px;height:16px;"><span>Add</span></div>
<div class="btn dis" style="left:405px;top:188px;width:35px;height:16px;"><span>Remove</span></div>
<div class="btn dis" style="left:405px;top:209px;width:35px;height:16px;"><span>Edit</span></div>
<div class="btn dis" style="left:405px;top:230px;width:35px;height:16px;"><span>Up</span></div>
<div class="btn dis" style="left:405px;top:251px;width:35px;height:16px;"><span>Down</span></div>
<div class="lb" style="left:459px;top:159px;width:155px;height:336px;"></div>
<div class="btn" style="left:618px;top:160px;width:34px;height:16px;"><span>Add</span></div>
<div class="btn" style="left:618px;top:181px;width:34px;height:16px;"><span>Remove</span></div>
<div class="btn" style="left:618px;top:202px;width:34px;height:16px;"><span>Edit</span></div>
<div class="btn" style="left:618px;top:223px;width:34px;height:16px;"><span>Up</span></div>
<div class="btn" style="left:618px;top:244px;width:34px;height:16px;"><span>Down</span></div>
<div class="lb" style="left:672px;top:159px;width:155px;height:336px;"></div>
<div class="btn" style="left:831px;top:160px;width:34px;height:16px;"><span>Add</span></div>
<div class="btn" style="left:831px;top:181px;width:34px;height:16px;"><span>Remove</span></div>
<div class="btn" style="left:831px;top:202px;width:34px;height:16px;"><span>Edit</span></div>
<div class="btn" style="left:831px;top:223px;width:34px;height:16px;"><span>Up</span></div>
<div class="btn" style="left:831px;top:244px;width:34px;height:16px;"><span>Down</span></div>
<div class="lb" style="left:459px;top:523px;width:155px;height:160px;border-bottom:none;"></div>
<div class="btn" style="left:618px;top:524px;width:34px;height:16px;"><span>Add</span></div>
<div class="btn" style="left:618px;top:545px;width:34px;height:16px;"><span>Remove</span></div>
<div class="btn" style="left:618px;top:566px;width:34px;height:16px;"><span>Edit</span></div>
<div class="btn" style="left:618px;top:587px;width:34px;height:16px;"><span>Up</span></div>
<div class="btn" style="left:618px;top:608px;width:34px;height:16px;"><span>Down</span></div>
<div class="lb" style="left:672px;top:523px;width:149px;height:160px;border-bottom:none;"></div>
<div class="btn" style="left:825px;top:524px;width:41px;height:16px;"><span>Add</span></div>
<div class="btn" style="left:825px;top:545px;width:41px;height:16px;"><span>Remove</span></div>
<div class="btn" style="left:825px;top:566px;width:41px;height:16px;"><span>Edit</span></div>
<div class="btn" style="left:825px;top:587px;width:41px;height:16px;"><span>Up</span></div>
<div class="btn" style="left:825px;top:608px;width:41px;height:16px;"><span>Down</span></div>
<div class="btn" style="left:825px;top:629px;width:41px;height:16px;"><span>Configure</span></div>
<div style="left:229px;top:681px;width:667px;height:15px;background:#ece9d8;"></div>
<div style="left:268px;top:681px;width:41px;height:12px;background:#fff;border-radius:0 0 3px 3px;"></div>
<div class="t" style="left:232px;top:683px;color:#000;">Overview</div>
<div class="t" style="left:271px;top:683px;color:#000;">Categories</div>
<div class="t" style="left:312px;top:683px;color:#000;">Component Attributes</div>
<div class="t" style="left:392px;top:683px;color:#000;">Block Attributes</div>
<div class="t" style="left:450px;top:683px;color:#000;">System Attributes</div>
<div style="left:267px;top:682px;width:1px;height:11px;background:#cfcbbb;"></div>
<div style="left:309px;top:682px;width:1px;height:11px;background:#cfcbbb;"></div>
<div style="left:388px;top:682px;width:1px;height:11px;background:#cfcbbb;"></div>
<div style="left:446px;top:682px;width:1px;height:11px;background:#cfcbbb;"></div>
<div style="left:513px;top:682px;width:1px;height:11px;background:#cfcbbb;"></div>
<div style="left:898px;top:19px;width:2px;height:680px;background:#efede1;"></div>
</div>
</body></html>
